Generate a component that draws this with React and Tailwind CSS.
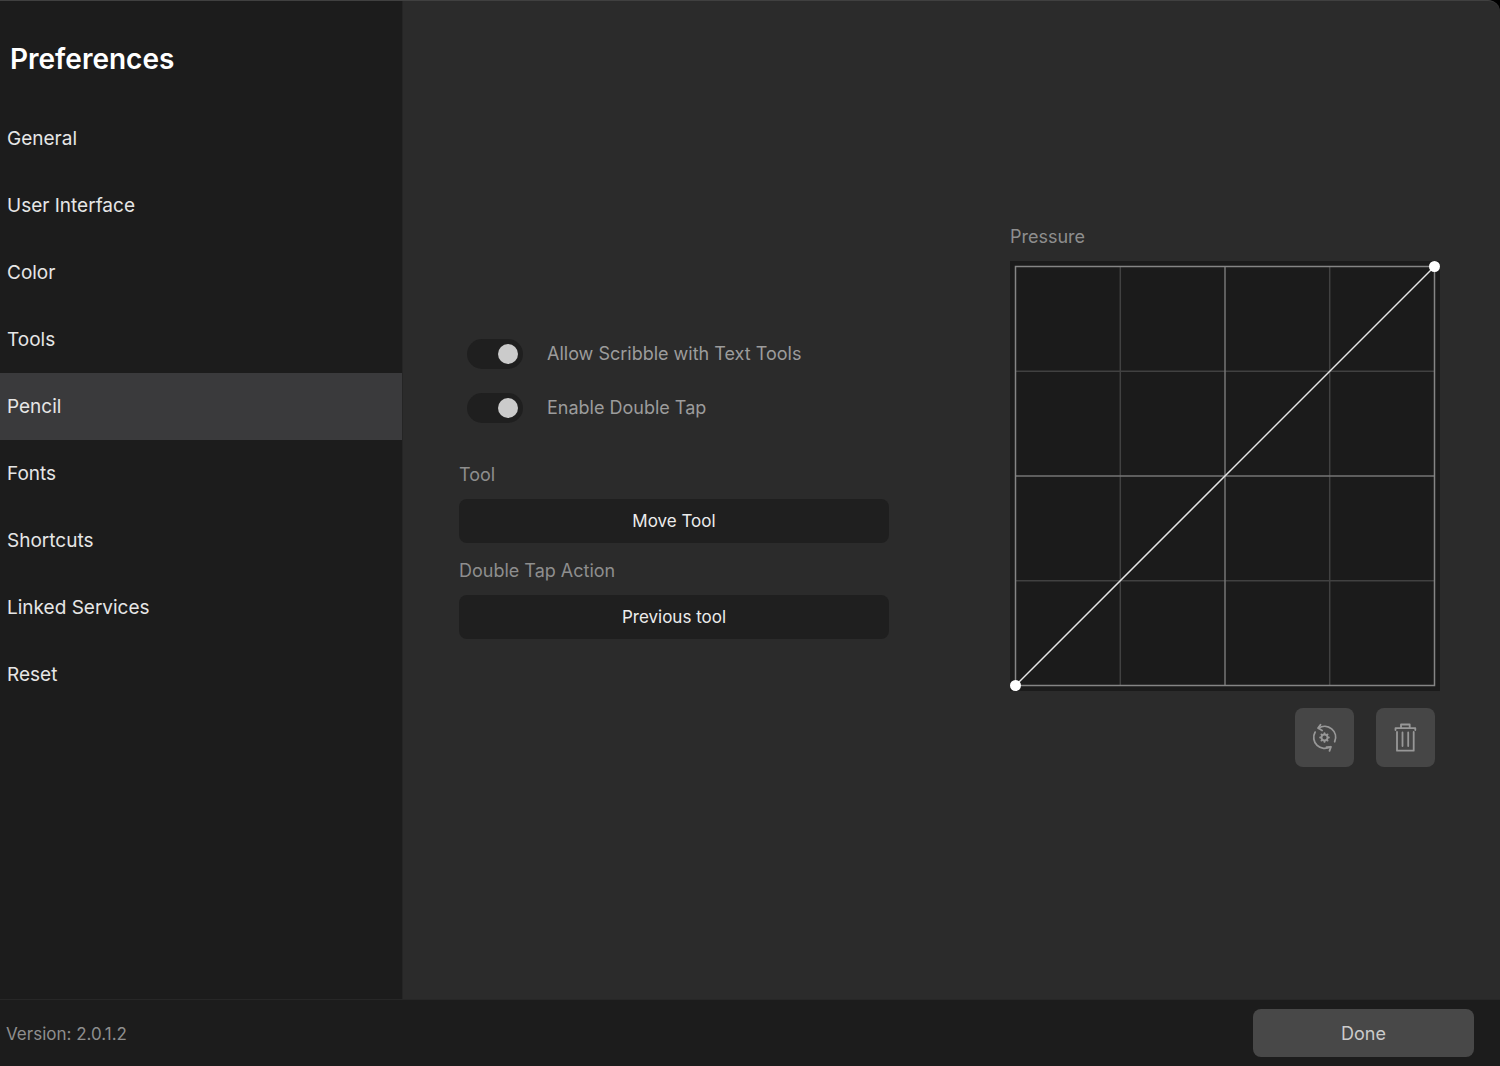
import { useState } from 'react';

const SECTIONS = [
  'General',
  'User Interface',
  'Color',
  'Tools',
  'Pencil',
  'Fonts',
  'Shortcuts',
  'Linked Services',
  'Reset',
];

function Toggle({ id, label }) {
  const [on, setOn] = useState(true);
  return (
    <div className="flex items-center gap-6">
      <input
        id={id}
        type="checkbox"
        role="switch"
        checked={on}
        onChange={() => setOn(!on)}
        className="appearance-none flex items-center w-14 h-[30px] px-[5px] rounded-full bg-[#1f1f1f] shrink-0 cursor-pointer before:block before:size-5 before:rounded-full before:bg-[#cbcbcb] checked:justify-end"
      />
      <label htmlFor={id} className="text-lg leading-6 text-[#9c9c9c]">{label}</label>
    </div>
  );
}

function Picker({ id, label, options }) {
  return (
    <div className="flex flex-col gap-3">
      <label htmlFor={id} className="text-lg leading-6 text-[#8e8e8e]">{label}</label>
      <select
        id={id}
        className="appearance-none w-full h-11 pt-0.5 rounded-lg bg-[#1f1f1f] text-[17px] text-[#ececec] text-center [text-align-last:center]"
      >
        {options.map(o => <option key={o}>{o}</option>)}
      </select>
    </div>
  );
}

function PressureCurve() {
  return (
    <svg viewBox="0 0 430 430" className="w-full overflow-visible bg-[#1b1b1b]" fill="none" role="img" aria-labelledby="pressure">
      <path d="M110.3 5.5v419M319.7 5.5v419M5.5 110.3h419M5.5 319.7h419" stroke="#414141" strokeWidth="1.5" />
      <path d="M215 5.5v419M5.5 215h419" stroke="#757575" strokeWidth="1.5" />
      <path d="M5.5 5.5h419v419h-419z" stroke="#858585" strokeWidth="1.5" />
      <path d="M5.5 424.5l419-419" stroke="#e6e6e6" strokeWidth="1.5" />
      <circle cx="5.5" cy="424.5" r="5.5" fill="#fff" />
      <circle cx="424.5" cy="5.5" r="5.5" fill="#fff" />
    </svg>
  );
}

function ResetIcon() {
  return (
    <svg viewBox="-15.5 -15.5 32 32" className="size-8" fill="none" stroke="#989898" strokeWidth="1.8" strokeLinecap="round" strokeLinejoin="round">
      <path d="M-6 -9.3A11 11 0 0 1 10.2 4.2" />
      <path d="M-4 -12.8L-6.4 -9.4L-2.4 -7" />
      <path d="M6 9.3A11 11 0 0 1 -9.4 -5.4" />
      <path d="M2 9.6L6.4 9.4L5 13.4" />
      <circle r="3" />
      <path d="M0 -3.8V-4.4M0 3.8V4.4M-3.8 0H-4.4M3.8 0H4.4M-2.6 -2.6L-3.1 -3.1M2.6 2.6L3.1 3.1M-2.6 2.6L-3.1 3.1M2.6 -2.6L3.1 -3.1" />
    </svg>
  );
}

function TrashIcon() {
  return (
    <svg viewBox="-15.5 -15.5 32 32" className="size-8" fill="none" stroke="#989898" strokeWidth="1.8" strokeLinecap="round" strokeLinejoin="round">
      <path d="M-10 -7.5V-9.3H9.8V-7.5" />
      <path d="M-4.5 -9.3V-13H4.2V-9.3" />
      <path d="M-8.5 -5.5V13.2H8.2V-5.5" />
      <path d="M-3 -5V8.5M2.7 -5V8.5" />
    </svg>
  );
}

export default function App() {
  const [active, setActive] = useState('Pencil');

  return (
    <div className="bg-black">
      <div className="min-h-screen flex flex-col rounded-tr-xl overflow-hidden border-t border-[#404040] bg-[#2b2b2b] font-[Inter,sans-serif]">
        <div className="flex flex-1">
          <nav className="w-[403px] shrink-0 bg-[#1c1c1c] border-r border-[#252525]">
            <h1 className="px-[10px] pt-9 pb-6 text-[28px] leading-11 font-semibold text-white">Preferences</h1>
            {SECTIONS.map(s => (
              <button
                key={s}
                onClick={() => setActive(s)}
                className={`block w-full h-[67px] px-[7px] pt-0.5 text-left text-[19px] text-[#e6e6e6] ${s === active ? 'bg-[#3a3a3c]' : ''}`}
              >
                {s}
              </button>
            ))}
          </nav>

          <main className="flex-1 flex items-center justify-between gap-8 pl-14 pr-[60px]">
            <div className="w-[430px] pb-[22px]">
              <div className="flex flex-col gap-6 pl-2">
                <Toggle id="scribble" label="Allow Scribble with Text Tools" />
                <Toggle id="double-tap" label="Enable Double Tap" />
              </div>
              <div className="flex flex-col gap-4 pt-10">
                <Picker id="tool" label="Tool" options={['Move Tool']} />
                <Picker id="action" label="Double Tap Action" options={['Previous tool']} />
              </div>
            </div>

            <div className="w-[430px] pb-2">
              <h2 id="pressure" className="pb-3 text-lg leading-6 text-[#8e8e8e]">Pressure</h2>
              <PressureCurve />
              <div className="flex justify-end gap-[22px] pt-[17px] pr-[5px]">
                <button aria-label="Reset curve" className="size-[59px] flex items-center justify-center rounded-lg bg-[#464646]">
                  <ResetIcon />
                </button>
                <button aria-label="Delete curve" className="size-[59px] flex items-center justify-center rounded-lg bg-[#464646]">
                  <TrashIcon />
                </button>
              </div>
            </div>
          </main>
        </div>

        <footer className="flex items-center justify-between h-[67px] pl-[6px] pr-[26px] border-t border-[#272727] bg-[#1c1c1c]">
          <p className="pt-0.5 text-[17px] leading-6 text-[#8e8e8e]">Version: 2.0.1.2</p>
          <button className="w-[221px] h-12 pt-0.5 rounded-lg bg-[#484848] text-lg text-[#cbcbcb]">Done</button>
        </footer>
      </div>
    </div>
  );
}
